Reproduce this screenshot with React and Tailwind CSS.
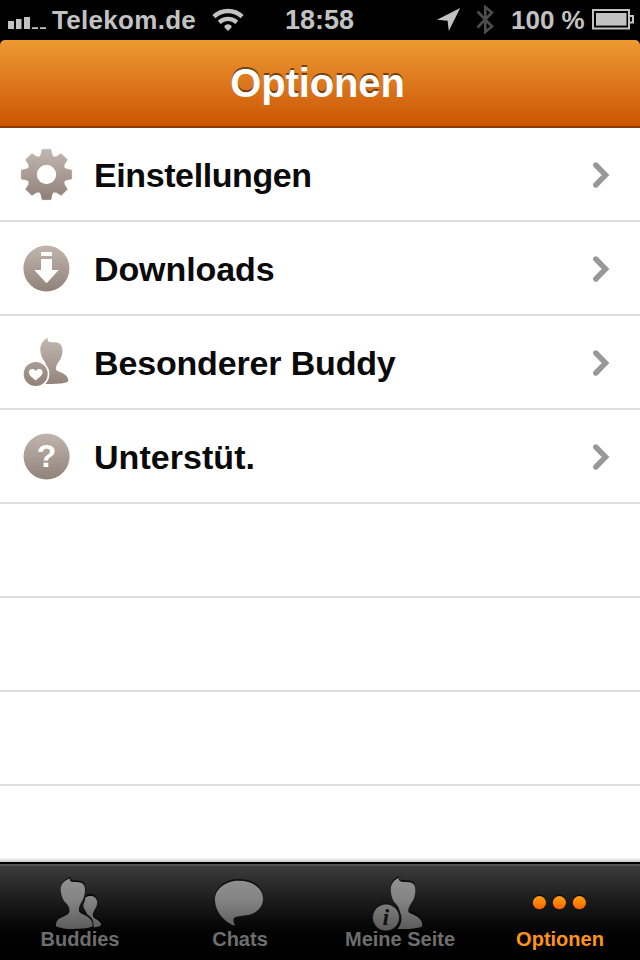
import React, { useState } from 'react';

// outline of the cog wheel, eight teeth around (26.5, 26.5)
const gearPath = () => {
  const c = 26.5;
  const points = [];
  for (let i = 0; i < 8; i++) {
    const a = (i * Math.PI) / 4;
    [[-7.1, -17.6], [-5.6, -19.4], [-4.3, -25.1], [4.3, -25.1], [5.6, -19.4], [7.1, -17.6]].forEach(([x, y]) => {
      const px = c + x * Math.cos(a) - y * Math.sin(a);
      const py = c + x * Math.sin(a) + y * Math.cos(a);
      points.push(`${px.toFixed(2)} ${py.toFixed(2)}`);
    });
  }
  return `M${points.join('L')}Z`;
};

const RowIcon = ({ id, children }) => (
  <svg className="w-[54px] h-[54px] shrink-0" viewBox="0 0 54 54">
    <defs>
      <linearGradient id={id} gradientUnits="userSpaceOnUse" x1="0" y1="2" x2="0" y2="50">
        <stop offset="0" stopColor="#c2b7b0" />
        <stop offset="1" stopColor="#908279" />
      </linearGradient>
    </defs>
    {children}
  </svg>
);

const SettingsIcon = () => (
  <RowIcon id="gear">
    <path d={gearPath()} fill="url(#gear)" stroke="url(#gear)" strokeWidth="0.8" strokeLinejoin="round" />
    <circle cx="26.5" cy="26.5" r="9.7" fill="#fff" />
  </RowIcon>
);

const DownloadIcon = () => (
  <RowIcon id="download">
    <circle cx="26.4" cy="26.4" r="23" fill="url(#download)" />
    <path d="M21 10h11v4H21zM21 17h11v11h6.7L26.5 41.3 14.3 28H21z" fill="#fff" />
  </RowIcon>
);

const BuddyIcon = () => (
  <RowIcon id="buddy">
    <path
      d="M27.7 1.8C27.2 4.6 28 6.2 31 6.2C35 6.2 38.6 6 40.6 8.6C42.8 11.4 42.9 16.5 41.6 20.6C40.3 24.4 37.4 27 36.2 30.4C35.3 33.4 36.2 34.6 38.6 35.5C41 36.5 44 37.3 46 39.6C47.8 41.6 48.6 43.8 48.2 45.6C45 47.4 39 48 33 48H25.6L26.2 31C26 28.5 25.6 27.1 24.4 25.3C22.1 22 20.4 18.8 20.3 13.8C20.2 8.3 23 4.5 27.7 1.8Z"
      fill="url(#buddy)"
    />
    <circle cx="15.7" cy="38" r="13.7" fill="#fff" />
    <circle cx="15.7" cy="38" r="12" fill="url(#buddy)" />
    <path d="M15.7 44.4C13 41.9 8.8 39.7 8.8 36.3C8.8 32.5 13.8 31.8 15.7 35C17.6 31.8 22.6 32.5 22.6 36.3C22.6 39.7 18.4 41.9 15.7 44.4Z" fill="#fff" />
  </RowIcon>
);

const SupportIcon = () => (
  <RowIcon id="support">
    <circle cx="26.6" cy="26.4" r="23" fill="url(#support)" />
    <text x="26.6" y="37.4" textAnchor="middle" fill="#fff" className="text-[32px] font-bold">
      ?
    </text>
  </RowIcon>
);

const TabIcon = ({ id, children }) => (
  <svg className="w-20 h-[60px] overflow-visible" viewBox="0 0 80 60">
    <defs>
      <linearGradient id={id} gradientUnits="userSpaceOnUse" x1="0" y1="8" x2="0" y2="60">
        <stop offset="0" stopColor="#929292" />
        <stop offset="0.45" stopColor="#828282" />
        <stop offset="1" stopColor="#5a5a5a" />
      </linearGradient>
    </defs>
    {children}
  </svg>
);

const BuddiesTabIcon = () => {
  const front =
    'M29.8 8.5C29.4 10.9 31 12 34 12C38.3 12 42 12.2 43.9 15C45.8 18 45.2 23.4 43.6 27.8C42.4 31.2 40 34 39.2 37.2C38.6 40.2 38.8 42 41 43.2C45 45.2 49 46.6 51.2 50.2C52.6 52.8 53 55 52.3 56.6C48 58.4 41 59 34 59C27 59 20 58.2 16 56.2C15.6 53.4 16.6 50.8 19 48.8C22 46.6 26.5 45.6 28.6 43.4C30.2 41.4 29.4 38.4 28.3 36C26.8 33 24.6 32.4 23.2 29.4C21.8 26.4 20.7 23 20.7 19.6C20.7 14 24.5 10.2 29.8 8.5Z';
  const back =
    'M50.5 25.9C54.5 25.9 57.2 28.6 57.2 32.6C57.1 37.2 54 40 53 43.2C52.4 46 53.2 47.4 55.4 48.8C58.4 50.6 61 52 61.2 54.8C60.4 56.5 57 57.2 53.5 57.3C54 53.8 53 51.6 51 49.2C49 47 46 46.2 47 44C46.6 41.5 44 39.6 43.4 36.6C43 33 45.6 31 45.2 27.5C46.4 26.4 48.3 25.9 50.5 25.9Z';
  return (
    <TabIcon id="tabBuddies">
      <path d={back} fill="#000" transform="translate(0 -1.8)" opacity="0.75" />
      <path d={back} fill="url(#tabBuddies)" />
      <path d={front} fill="#0a0a0a" transform="translate(0.6 -1.6)" />
      <path d={front} fill="url(#tabBuddies)" />
    </TabIcon>
  );
};

const ChatsTabIcon = () => {
  const bubble =
    'M39 10.8C52.6 10.8 63 18.2 63 28.6C63 38 56 43.8 46.5 45.2C40 46.1 33.4 46.2 33.4 50C33.4 52.4 34.6 54.2 35.1 55.8C27.4 53.6 15 44 15 29.5C15 19 25.4 10.8 39 10.8Z';
  return (
    <TabIcon id="tabChats">
      <path d={bubble} fill="#000" transform="translate(0 -1.8)" opacity="0.7" />
      <path d={bubble} fill="url(#tabChats)" />
    </TabIcon>
  );
};

const ProfileTabIcon = () => {
  const person =
    'M38.8 7.8C38.4 10.8 40.4 11.8 43.4 12C47.8 12.2 51.8 11.8 53.9 14.6C56.1 17.8 55.6 23.6 54 28.2C52.8 31.6 49.6 34.8 48.6 38.2C47.9 41.4 48.4 42.6 50.8 43.6C55 45.4 58.8 46.8 60.9 50.2C62.2 52.6 62.5 55 61.9 56.4C58 58.2 50 59 44 59H37.3C41.5 54.5 42.6 48 40.2 42.5C39.2 40 39 37.4 37.3 35.4C35.4 33.2 34 32.4 32.8 29.6C31.6 26.6 30.8 23.4 30.8 19.6C30.7 14 33.8 10.3 38.8 7.8Z';
  return (
    <TabIcon id="tabProfile">
      <path d={person} fill="#000" transform="translate(0 -1.8)" opacity="0.75" />
      <path d={person} fill="url(#tabProfile)" />
      <circle cx="26" cy="46.8" r="14.4" fill="#151515" />
      <circle cx="26" cy="47.5" r="13" fill="url(#tabProfile)" />
      <text
        x="25.8"
        y="55"
        textAnchor="middle"
        fill="#111"
        className="text-[24px] font-bold italic font-['Liberation_Serif',serif]"
      >
        i
      </text>
    </TabIcon>
  );
};

const OptionsTabIcon = () => (
  <svg className="w-20 h-[60px]" viewBox="0 0 80 60">
    <defs>
      <linearGradient id="dots" x1="0" y1="0" x2="0" y2="1">
        <stop offset="0" stopColor="#ff9d12" />
        <stop offset="0.5" stopColor="#ff8408" />
        <stop offset="1" stopColor="#f95f00" />
      </linearGradient>
    </defs>
    {[19.4, 39.4, 59.4].map((x) => (
      <g key={x}>
        <circle cx={x} cy="31.2" r="6.6" fill="#000" opacity="0.6" />
        <circle cx={x} cy="32.6" r="6.6" fill="url(#dots)" />
      </g>
    ))}
  </svg>
);

const StatusBar = () => (
  <div className="flex h-10 bg-black text-[#c2c2c2] text-[26px] leading-10 font-bold whitespace-nowrap">
    <div className="flex w-[285px] pl-2">
      <svg className="w-[44px] h-10" viewBox="8 0 44 40" fill="currentColor">
        <path d="M8 21h6v8H8zM16 19h5.5v10H16zM24 17h6v12h-6zM32 27.2h6V29h-6zM40 27.2h6V29h-6z" />
      </svg>
      <span className="w-[160px] tracking-[0.3px]">Telekom.de</span>
      <svg className="w-8 h-10" viewBox="212 0 32 40" fill="none" stroke="currentColor">
        <path d="M213.9 17.2A20.6 20.6 0 0 1 242.1 17.2" strokeWidth="4.6" transform="translate(0 -.6)" />
        <path d="M219.2 22.4A13 13 0 0 1 236.8 22.4" strokeWidth="4.2" />
        <path d="M228 31L224.3 27.2C224.6 23.4 231.4 23.4 231.7 27.2Z" fill="currentColor" stroke="none" />
      </svg>
    </div>
    <span className="w-[152px] text-[27px]">18:58</span>
    <svg className="w-6 h-10" viewBox="437 0 24 40" fill="currentColor">
      <path d="M460.2 8L448.8 31L447.6 20.8L437 19.8Z" />
    </svg>
    <svg className="w-[50px] h-10" viewBox="461 0 50 40" fill="none" stroke="#4d4d4d" strokeWidth="2.6">
      <path d="M477.5 11.5L492 26.5L485.3 32V7L492 12.5L477.5 27.5" />
    </svg>
    <span className="w-[81px]">100 %</span>
    <svg className="w-[44px] h-10" viewBox="592 0 44 40" fill="none" stroke="currentColor" strokeWidth="2">
      <path d="M593 10h36v18.4h-36zM630 16h3v6.6h-3" />
      <path d="M596 13h30.5v12.6H596z" fill="currentColor" stroke="none" />
    </svg>
  </div>
);

const rows = [
  { label: 'Einstellungen', Icon: SettingsIcon, spacing: 'tracking-[-0.4px]' },
  { label: 'Downloads', Icon: DownloadIcon, spacing: 'tracking-[-0.1px]' },
  { label: 'Besonderer Buddy', Icon: BuddyIcon, spacing: 'tracking-[-0.16px]' },
  { label: 'Unterstüt.', Icon: SupportIcon, spacing: 'tracking-[0.05px]' },
];

const tabs = [
  { label: 'Buddies', Icon: BuddiesTabIcon },
  { label: 'Chats', Icon: ChatsTabIcon },
  { label: 'Meine Seite', Icon: ProfileTabIcon },
  { label: 'Optionen', Icon: OptionsTabIcon },
];

export default function App() {
  const [active, setActive] = useState('Optionen');

  return (
    <div className="flex flex-col w-[640px] h-[960px] overflow-hidden bg-white font-['Liberation_Sans',sans-serif]">
      <StatusBar />

      <div className="bg-black">
        <header className="h-[88px] pr-[5px] rounded-t-[5px] border-b-2 border-[#8a3c05] bg-linear-to-b from-[#ed9a31] to-[#cb5400] flex justify-center">
          <h1 className="text-white text-[40px] leading-[86px] font-bold tracking-[-0.1px] [text-shadow:0_-2px_0_rgba(75,45,10,0.75)]">
            Optionen
          </h1>
        </header>
      </div>

      <main className="flex-1 min-h-0 overflow-hidden">
        {rows.map(({ label, Icon, spacing }) => (
          <div key={label} className="h-[94px] flex items-center pt-0.5 pl-5 border-b-2 border-[#dedede]">
            <Icon />
            <span className={`flex-1 pl-5 text-[34px] leading-10 font-bold text-[#0a0a0a] ${spacing}`}>{label}</span>
            <svg className="w-[50px] h-8" viewBox="590 159 50 32" fill="none" stroke="#989898" strokeWidth="5.4" strokeLinecap="round">
              <path d="M595.8 165L605.6 175L595.8 185" />
            </svg>
          </div>
        ))}
        {[0, 1, 2].map((i) => (
          <div key={i} className="h-[94px] border-b-2 border-[#dedede]" />
        ))}
      </main>
      <div className="h-1 bg-linear-to-b from-[#f8f8f8] to-[#c9c9c9]" />

      <nav className="h-[98px] border-t-2 border-black bg-linear-to-b from-[#3e3e3e] to-black">
        <div className="h-full grid grid-cols-4 border-t-2 border-[#505050]">
          {tabs.map(({ label, Icon }) => (
            <button key={label} onClick={() => setActive(label)} className="flex flex-col items-center pt-1">
              <Icon />
              <span
                className={`-mt-px text-xl leading-5 font-bold [text-shadow:0_-2px_0_rgba(0,0,0,0.6)] ${
                  active === label ? 'text-[#ff9418]' : 'text-[#6e6e6e]'
                }`}
              >
                {label}
              </span>
            </button>
          ))}
        </div>
      </nav>
    </div>
  );
}
